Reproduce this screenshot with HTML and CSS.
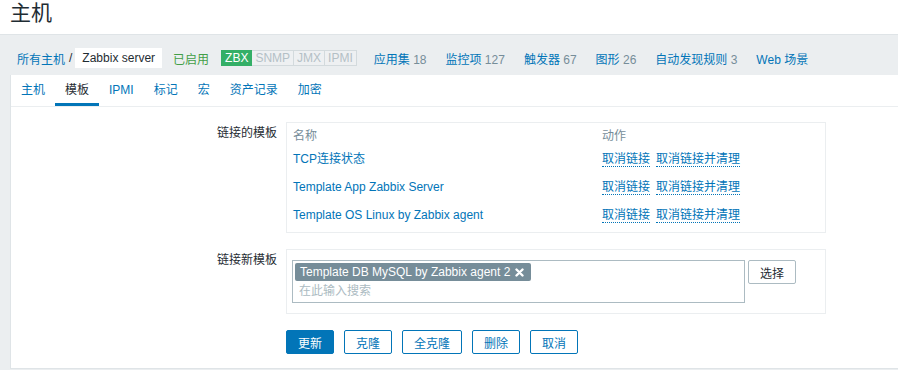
FILE: index.html
```html
<!DOCTYPE html>
<html lang="zh-CN">
<head>
    <meta charset="UTF-8">
    <meta name="viewport" content="width=device-width, initial-scale=1.0">
    <title>主机</title>
    <link rel="stylesheet" href="styles.css">
</head>
<body>
    <header class="page-header">
        <h1>主机</h1>
    </header>

    <main class="page">
        <nav class="host-nav">
            <a href="#" class="link">所有主机</a>
            <span class="separator">/</span>
            <span class="host-name">Zabbix server</span>
            <span class="status-on">已启用</span>
            <span class="status-box">
                <span class="status status-green">ZBX</span>
                <span class="status">SNMP</span>
                <span class="status">JMX</span>
                <span class="status">IPMI</span>
            </span>
            <ul class="nav-links">
                <li><a href="#" class="link">应用集</a> <span class="count">18</span></li>
                <li><a href="#" class="link">监控项</a> <span class="count">127</span></li>
                <li><a href="#" class="link">触发器</a> <span class="count">67</span></li>
                <li><a href="#" class="link">图形</a> <span class="count">26</span></li>
                <li><a href="#" class="link">自动发现规则</a> <span class="count">3</span></li>
                <li><a href="#" class="link">Web 场景</a></li>
            </ul>
        </nav>

        <div class="tabs-container">
            <ul class="tabs">
                <li><a href="#">主机</a></li>
                <li class="active"><a href="#">模板</a></li>
                <li><a href="#">IPMI</a></li>
                <li><a href="#">标记</a></li>
                <li><a href="#">宏</a></li>
                <li><a href="#">资产记录</a></li>
                <li><a href="#">加密</a></li>
            </ul>

            <form class="tab-body">
                <div class="form-row">
                    <label class="form-label">链接的模板</label>
                    <div class="table-box">
                        <table class="linked-table">
                            <thead>
                                <tr>
                                    <th class="col-name">名称</th>
                                    <th>动作</th>
                                </tr>
                            </thead>
                            <tbody>
                                <tr>
                                    <td><a href="#" class="link">TCP连接状态</a></td>
                                    <td><a href="#" class="action">取消链接</a><a href="#" class="action">取消链接并清理</a></td>
                                </tr>
                                <tr>
                                    <td><a href="#" class="link">Template App Zabbix Server</a></td>
                                    <td><a href="#" class="action">取消链接</a><a href="#" class="action">取消链接并清理</a></td>
                                </tr>
                                <tr>
                                    <td><a href="#" class="link">Template OS Linux by Zabbix agent</a></td>
                                    <td><a href="#" class="action">取消链接</a><a href="#" class="action">取消链接并清理</a></td>
                                </tr>
                            </tbody>
                        </table>
                    </div>
                </div>

                <div class="form-row">
                    <label class="form-label">链接新模板</label>
                    <div class="field-box">
                        <div class="multiselect">
                            <span class="chip">Template DB MySQL by Zabbix agent 2
                                <svg class="chip-remove" width="9" height="9" viewBox="0 0 9 9">
                                    <path d="M1.5 1.5 L7.5 7.5 M7.5 1.5 L1.5 7.5" stroke="#fff" stroke-width="2.4" stroke-linecap="round"/>
                                </svg>
                            </span>
                            <input type="text" class="ms-input" placeholder="在此输入搜索">
                        </div>
                        <button type="button" class="btn-grey">选择</button>
                    </div>
                </div>

                <div class="form-actions">
                    <button type="button" class="btn btn-main">更新</button>
                    <button type="button" class="btn">克隆</button>
                    <button type="button" class="btn">全克隆</button>
                    <button type="button" class="btn">删除</button>
                    <button type="button" class="btn">取消</button>
                </div>
            </form>
        </div>
    </main>
</body>
</html>
```

FILE: styles.css
```css
body {
    margin: 0;
    font-family: "Liberation Sans", "Noto Sans CJK SC", sans-serif;
    font-size: 12px;
    color: #1f2c33;
    background: #ebeef0;
}
a {
    text-decoration: none;
}
.link {
    color: #0275b8;
}

/* header */
.page-header {
    height: 35px;
    padding-left: 10px;
    background: #fff;
    border-bottom: 1px solid #dfe4e7;
    box-sizing: border-box;
}
.page-header h1 {
    margin: 0;
    font-size: 21px;
    font-weight: normal;
    line-height: 25px;
}

/* host navigation */
.host-nav {
    display: flex;
    align-items: center;
    height: 40px;
    padding: 6px 0 0 17px;
    box-sizing: border-box;
}
.separator {
    margin: 0 3px 0 4px;
}
.host-name {
    padding: 0 7px;
    line-height: 20px;
    background: #fff;
}
.status-on {
    margin-left: 11px;
    color: #429e47;
}
.status-box {
    display: flex;
    margin-left: 12px;
}
.status {
    padding: 0 3px;
    line-height: 14px;
    border: 1px solid #d3dadd;
    background: #eef0f2;
    color: #b4c0c6;
}
.status + .status {
    border-left: 0;
}
.status-green {
    background: #34af67;
    border-color: #34af67;
    color: #fff;
}
.nav-links {
    display: flex;
    gap: 19px;
    margin: 0 0 0 17px;
    padding: 0;
    list-style: none;
}
.count {
    color: #768d99;
}

/* tabs */
.tabs-container {
    margin-left: 10px;
    background: #fff;
    border-left: 1px solid #dfe4e7;
    border-bottom: 1px solid #dfe4e7;
}
.tabs {
    display: flex;
    margin: 0;
    padding: 0;
    list-style: none;
    border-bottom: 1px solid #ebeef0;
}
.tabs a {
    display: block;
    padding: 2px 10px 0;
    line-height: 26px;
    color: #0275b8;
    border-bottom: 3px solid transparent;
}
.tabs .active a {
    color: #1f2c33;
    border-bottom-color: #0275b8;
}

/* form */
.tab-body {
    display: flex;
    flex-direction: column;
    gap: 16px;
    padding: 15px 0 14px;
}
.form-row {
    display: flex;
    align-items: flex-start;
}
.form-label {
    width: 266px;
    padding-top: 4px;
    line-height: 14px;
    text-align: right;
}
.table-box,
.field-box {
    width: 540px;
    margin-left: 9px;
    border: 1px solid #ebeef0;
    box-sizing: border-box;
}
.table-box {
    padding: 0 1px 2px;
}
.linked-table {
    width: 100%;
    border-collapse: collapse;
    table-layout: fixed;
}
.linked-table th {
    padding: 6px 5px 3px;
    line-height: 14px;
    text-align: left;
    font-weight: normal;
    color: #768d99;
}
.linked-table th.col-name {
    width: 299px;
}
.linked-table td {
    padding: 6px 5px 8px;
    line-height: 14px;
    white-space: nowrap;
}
.action {
    color: #0275b8;
    border-bottom: 1px dotted #0275b8;
    margin-right: 6px;
}

.field-box {
    display: flex;
    align-items: flex-start;
    padding: 10px 5px;
}
.multiselect {
    width: 453px;
    height: 43px;
    padding: 2px;
    border: 1px solid #acbbc2;
    box-sizing: border-box;
}
.chip {
    display: inline-flex;
    align-items: center;
    height: 18px;
    padding: 0 7px 0 5px;
    background: #768d99;
    color: #fff;
    border-radius: 2px;
}
.chip-remove {
    margin-left: 5px;
}
.ms-input {
    display: block;
    width: 100%;
    height: 20px;
    padding: 0 0 0 4px;
    border: 0;
    outline: none;
    font: inherit;
    box-sizing: border-box;
}
.ms-input::placeholder {
    color: #acbbc2;
}
.btn-grey {
    margin-left: 3px;
    width: 48px;
    height: 24px;
    padding: 0;
    border: 1px solid #acbbc2;
    border-radius: 2px;
    background: #fff;
    color: #1f2c33;
    font: inherit;
}

.form-actions {
    display: flex;
    gap: 10px;
    margin-left: 275px;
}
.btn {
    height: 24px;
    padding: 0 11px;
    border: 1px solid #0275b8;
    border-radius: 2px;
    background: #fff;
    color: #0275b8;
    font: inherit;
}
.btn-main {
    background: #0275b8;
    color: #fff;
}
```
